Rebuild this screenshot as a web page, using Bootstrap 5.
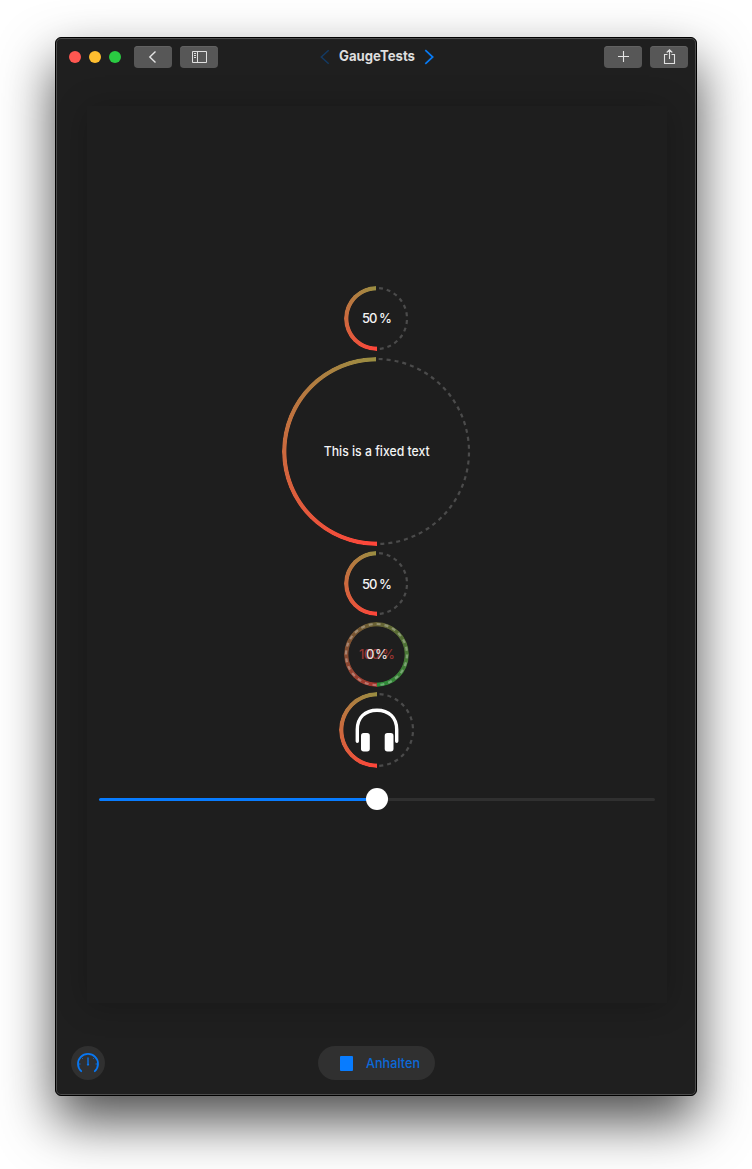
<!DOCTYPE html>
<html lang="de">
<head>
<meta charset="utf-8">
<meta name="viewport" content="width=device-width, initial-scale=1">
<title>GaugeTests</title>
<link href="https://cdn.jsdelivr.net/npm/bootstrap@5.3.0/dist/css/bootstrap.min.css" rel="stylesheet">
<style>
body { background: #fff; font-family: Inter, "Liberation Sans", sans-serif; height: 1169px; padding-top: 37px; overflow: hidden; }
.app-window { width: 642px; height: 1059px; border: 1px solid #000; border-radius: 6px; background: #1f1f1f;
  box-shadow: inset 0 0 0 1px #4c4c4c, 0 25px 53px rgba(0,0,0,.7); }
.titlebar { height: 38px; padding: 0 8px 0 13px; }
.side { width: 149px; }
.light { width: 12px; height: 12px; }
.light-close { background: #ff5751; }
.light-min { background: #ffbe2f; }
.light-max { background: #2acb42; margin-right: 5px; }
.page-title { margin-right: 4px; }
.tool { width: 38px; height: 22px; border-radius: 4px; background: #575757; border: 0; padding: 0; box-shadow: inset 0 1px 0 #626262; }
.preview { width: 580px; height: 897px; margin: 30px 0 0 31px; background: #1e1e1e; box-shadow: 0 2px 30px rgba(0,0,0,.24); padding-top: 180px; }
.gauges { gap: 5.5px; padding-right: 1px; }
.gauge { width: var(--d); height: var(--d); }
.gauge svg { display: block; position: relative; }
.gauge::before { content: ""; position: absolute; inset: 0; border-radius: 50%;
  background: conic-gradient(from 180deg, #ff453a, #998e42 50%, transparent 50%);
  -webkit-mask: radial-gradient(closest-side, transparent calc(100% - 4.8px), #000 calc(100% - 4px));
  mask: radial-gradient(closest-side, transparent calc(100% - 4.8px), #000 calc(100% - 4px)); }
.gauge.blend::before { background: conic-gradient(from 180deg, #ff453a, #998e42 50%, #32d74b); opacity: .6; }
.gauge text { font-size: 13px; font-weight: 500; fill: #f4f4f4; text-anchor: middle; }
.dash { fill: none; stroke: #4b4b4b; stroke-width: 2.2; }
.slider { margin: 20px 12px 0; height: 22px; }
.track { height: 3px; border-radius: 2px; background: #303030; }
.track-on { background: #087cff; }
.knob { width: 22px; height: 22px; background: #fff; margin: 0 -11px; z-index: 1; }
.footbar { margin-top: 43px; padding: 0 15px; display: grid; grid-template-columns: 1fr auto 1fr; }
.round { width: 34px; height: 34px; background: #303030; }
.stop { width: 117px; height: 34px; background: #303030; color: #0b69d8; font-size: 13px; font-weight: 500; padding: 0 0 0 22px; border: 0; }
.heading { font-size: 14px; font-weight: 700; fill: #dedede; }
</style>
</head>
<body>
<main class="app-window mx-auto">
  <header class="titlebar d-flex align-items-center justify-content-between">
    <div class="side d-flex align-items-center gap-2">
      <span class="light light-close rounded-circle"></span>
      <span class="light light-min rounded-circle"></span>
      <span class="light light-max rounded-circle"></span>
      <button class="tool flex-shrink-0 d-flex" aria-label="Back">
        <svg width="38" height="22" fill="none" stroke="#e4e4e4" stroke-width="1.4"><path d="M21.5 5.5 15.8 11l5.7 5.5"/></svg>
      </button>
      <button class="tool flex-shrink-0 d-flex" aria-label="Sidebar">
        <svg width="38" height="22" fill="none" stroke="#e0e0e0"><path d="M12.5 5.5h14v11h-14zM17.5 5.5v11M14 7.5h2M14 9.5h2M14 11.5h2"/></svg>
      </button>
    </div>
    <div class="page-title d-flex align-items-center">
      <svg width="10" height="16" fill="none" stroke="#143a63" stroke-width="1.5"><path d="M8.7 1.2 1.3 8l7.4 6.8"/></svg>
      <svg width="94" height="22"><text class="heading" x="9" y="15" textLength="76" lengthAdjust="spacingAndGlyphs">GaugeTests</text></svg>
      <svg width="10" height="16" fill="none" stroke="#087bf5" stroke-width="1.7"><path d="M1.3 1.2 8.7 8l-7.4 6.8"/></svg>
    </div>
    <div class="side d-flex justify-content-end gap-2">
      <button class="tool d-flex" aria-label="Add">
        <svg width="38" height="22" fill="none" stroke="#e4e4e4" stroke-width="1.1"><path d="M14 10.5h11M19.5 5v11"/></svg>
      </button>
      <button class="tool d-flex" aria-label="Share">
        <svg width="38" height="22" fill="none" stroke="#e0e0e0" stroke-width="1.1"><path d="M17.5 8.5h-3v9h10v-9h-3M19.5 13V3.8M16.7 6.5l2.8-2.8 2.8 2.8"/></svg>
      </button>
    </div>
  </header>

  <section class="preview">
    <div class="gauges d-flex flex-column align-items-center">
      <div class="gauge position-relative" style="--d:65px">
        <svg width="65" height="65"><path class="dash" stroke-dasharray="3.9 3.9" stroke-dashoffset="-2.6" d="M32.5 2a30.5 30.5 0 0 1 0 61"/>
        <text x="33" y="37" textLength="30">50 %</text></svg>
      </div>
      <div class="gauge position-relative" style="--d:189px">
        <svg width="189" height="189"><path class="dash" stroke-dasharray="4 4" stroke-dashoffset="-2.2" d="M94.5 2a92.5 92.5 0 0 1 0 185"/>
        <text x="94.7" y="99" textLength="106" lengthAdjust="spacingAndGlyphs">This is a fixed text</text></svg>
      </div>
      <div class="gauge position-relative" style="--d:65px">
        <svg width="65" height="65"><path class="dash" stroke-dasharray="3.9 3.9" stroke-dashoffset="-2.6" d="M32.5 2a30.5 30.5 0 0 1 0 61"/>
        <text x="33" y="38" textLength="30">50 %</text></svg>
      </div>
      <div class="gauge blend position-relative" style="--d:65px">
        <svg width="65" height="65"><circle class="dash" style="stroke:#ffffff4d" stroke-dasharray="3.99 3.99" cx="32.5" cy="32.5" r="30.5"/>
        <text x="33" y="37" textLength="36" style="fill:#963532">100 %</text>
        <text x="33" y="37" textLength="22" style="fill:#e2dcdc">0 %</text></svg>
      </div>
      <div class="gauge position-relative" style="--d:76px">
        <svg width="76" height="76"><path class="dash" stroke-dasharray="4 4" stroke-dashoffset="-2.6" d="M38 2a36 36 0 0 1 0 72"/>
        <path d="M18.3 49.2V37.5C18.3 25.5 26 18.2 38 18.2s19.7 7.3 19.7 19.3v11.7" fill="none" stroke="#fff" stroke-width="3.4" stroke-linecap="round"/>
        <rect x="22" y="41" width="8.8" height="18.5" rx="2.7" fill="#fff"/><rect x="45.7" y="41" width="8.8" height="18.5" rx="2.7" fill="#fff"/></svg>
      </div>
    </div>
    <div class="slider d-flex align-items-center">
      <div class="track track-on flex-fill"></div>
      <div class="knob rounded-circle"></div>
      <div class="track flex-fill"></div>
    </div>
  </section>

  <footer class="footbar align-items-center">
    <div class="round rounded-circle">
      <svg class="d-block" width="34" height="34" fill="none" stroke="#0877f2" stroke-width="1.8" stroke-linecap="round"><path d="M10.2 25.2a10 10 0 1 1 13.6 0"/><path d="M17 12v7" stroke-width="1.3"/><circle cx="17" cy="18.5" r=".6" stroke-width="1"/><path d="M8.5 18h.5M25 18h.5M11 12l.4.4M23 12l-.4.4" stroke-width="1"/></svg>
    </div>
    <button class="stop rounded-pill d-flex align-items-center">
      <svg width="13" height="15" class="me-1"><rect width="13" height="15" rx="1" fill="#087cff"/></svg>
      <svg width="72" height="22"><text x="9" y="15.5" textLength="54" lengthAdjust="spacingAndGlyphs" fill="#0b69d8">Anhalten</text></svg>
    </button>
  </footer>
</main>
<script src="https://cdn.jsdelivr.net/npm/bootstrap@5.3.0/dist/js/bootstrap.bundle.min.js"></script>
</body>
</html>
